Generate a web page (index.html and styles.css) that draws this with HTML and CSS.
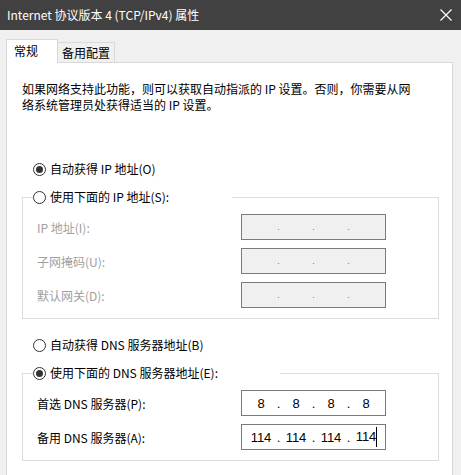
FILE: index.html
```html
<!DOCTYPE html>
<html lang="zh-CN">
<head>
    <meta charset="utf-8">
    <title>Internet 协议版本 4 (TCP/IPv4) 属性</title>
    <link rel="stylesheet" href="styles.css">
</head>
<body>
    <div class="titlebar">
        <span class="title">Internet 协议版本 4 (TCP/IPv4) 属性</span>
        <svg class="close" width="12" height="12" viewBox="0 0 12 12">
            <path d="M0.5 0.5L11.5 11.5M11.5 0.5L0.5 11.5" stroke="#fff" stroke-width="1.2" fill="none"/>
        </svg>
    </div>

    <div class="tabs">
        <div class="tab active">常规</div>
        <div class="tab">备用配置</div>
    </div>

    <div class="panel">
        <p class="intro">如果网络支持此功能，则可以获取自动指派的 IP 设置。否则，你需要从网<br>络系统管理员处获得适当的 IP 设置。</p>

        <div class="option first"><span class="radio checked"></span>自动获得 IP 地址(O)</div>

        <fieldset class="group disabled">
            <legend class="option legend-ip"><span class="radio"></span>使用下面的 IP 地址(S):</legend>
            <div class="rows">
                <span class="label">IP 地址(I):</span>
                <div class="ipbox"><span class="seg"></span><span class="dot">.</span><span class="seg"></span><span class="dot">.</span><span class="seg"></span><span class="dot">.</span><span class="seg"></span></div>
                <span class="label">子网掩码(U):</span>
                <div class="ipbox"><span class="seg"></span><span class="dot">.</span><span class="seg"></span><span class="dot">.</span><span class="seg"></span><span class="dot">.</span><span class="seg"></span></div>
                <span class="label">默认网关(D):</span>
                <div class="ipbox"><span class="seg"></span><span class="dot">.</span><span class="seg"></span><span class="dot">.</span><span class="seg"></span><span class="dot">.</span><span class="seg"></span></div>
            </div>
        </fieldset>

        <div class="option second"><span class="radio"></span>自动获得 DNS 服务器地址(B)</div>

        <fieldset class="group dns">
            <legend class="option legend-dns"><span class="radio checked"></span>使用下面的 DNS 服务器地址(E):</legend>
            <div class="rows">
                <span class="label">首选 DNS 服务器(P):</span>
                <div class="ipbox"><span class="seg">8</span><span class="dot">.</span><span class="seg">8</span><span class="dot">.</span><span class="seg">8</span><span class="dot">.</span><span class="seg">8</span></div>
                <span class="label">备用 DNS 服务器(A):</span>
                <div class="ipbox"><span class="seg">114</span><span class="dot">.</span><span class="seg">114</span><span class="dot">.</span><span class="seg">114</span><span class="dot">.</span><span class="seg"><span class="caret">114</span></span></div>
            </div>
        </fieldset>
    </div>
</body>
</html>
```

FILE: styles.css
```css
*{
    margin: 0;
    padding: 0;
    box-sizing: border-box;
}
body{
    width: 461px;
    height: 475px;
    overflow: hidden;
    background-color: #f0f0f0;
    font-family: "Noto Sans CJK SC", "Liberation Sans", sans-serif;
    font-size: 12px;
    color: #000;
}

/* window title */
.titlebar{
    height: 30px;
    background-color: #414141;
    color: #fff;
    display: flex;
    align-items: center;
    justify-content: space-between;
    padding: 0 9px 0 7px;
}
.title{
    line-height: 16px;
}
.close{
    display: block;
}

/* tabs */
.tabs{
    display: flex;
    align-items: flex-end;
    margin-top: 9px;
    margin-bottom: -1px;
    padding-left: 6px;
    position: relative;
    z-index: 1;
}
.tab{
    height: 20px;
    margin-bottom: 1px;
    margin-left: -1px;
    padding: 0 4px;
    border: 1px solid #d9d9d9;
    border-bottom: none;
    background-color: #f0f0f0;
    line-height: 19px;
}
.tab.active{
    width: 52px;
    height: 24px;
    margin-left: 0;
    margin-bottom: 0;
    padding-left: 7px;
    background-color: #fff;
    line-height: 22px;
    position: relative;
    z-index: 1;
}

/* page */
.panel{
    width: 447px;
    height: 430px;
    margin-left: 6px;
    border: 1px solid #d9d9d9;
    background-color: #fff;
}
.intro{
    margin: 18px 0 0 15px;
    line-height: 16px;
}

.option{
    display: flex;
    align-items: center;
    height: 18px;
    line-height: 18px;
}
.option.first{
    margin: 47px 0 0 26px;
}
.option.second{
    margin: 17px 0 0 26px;
}
.radio{
    width: 13px;
    height: 13px;
    margin-right: 4px;
    border: 1px solid #333;
    border-radius: 50%;
    background-color: #fff;
    display: flex;
    align-items: center;
    justify-content: center;
    flex: none;
}
.radio.checked::after{
    content: "";
    width: 7px;
    height: 7px;
    border-radius: 50%;
    background-color: #333;
}

/* group boxes */
.group{
    margin: 10px 13px 0 15px;
    padding: 8px 13px 10px 14px;
    border: 1px solid #dcdcdc;
}
.group legend{
    margin-left: -4px;
}
.legend-ip{
    width: 199px;
}
.legend-dns{
    width: 247px;
}
.rows{
    display: grid;
    grid-template-columns: 204px 145px;
    grid-auto-rows: 26px;
    row-gap: 8px;
    align-items: center;
}
.label{
    line-height: 16px;
    padding-top: 2px;
}
.disabled .label{
    color: #a0a0a0;
}

.ipbox{
    height: 26px;
    border: 1px solid #7a7a7a;
    background-color: #fff;
    display: flex;
    align-items: center;
    padding: 0 5px;
    font-family: "Liberation Sans", "Noto Sans CJK SC", sans-serif;
    font-size: 13px;
}
.disabled .ipbox{
    background-color: #f0f0f0;
}
.seg{
    width: 28px;
    text-align: center;
}
.dot{
    width: 7px;
    text-align: center;
}
.disabled .dot{
    color: #707070;
    font-size: 9px;
}
.caret{
    display: inline-block;
    height: 20px;
    line-height: 20px;
    box-shadow: 1px 0 0 #000;
}
```
